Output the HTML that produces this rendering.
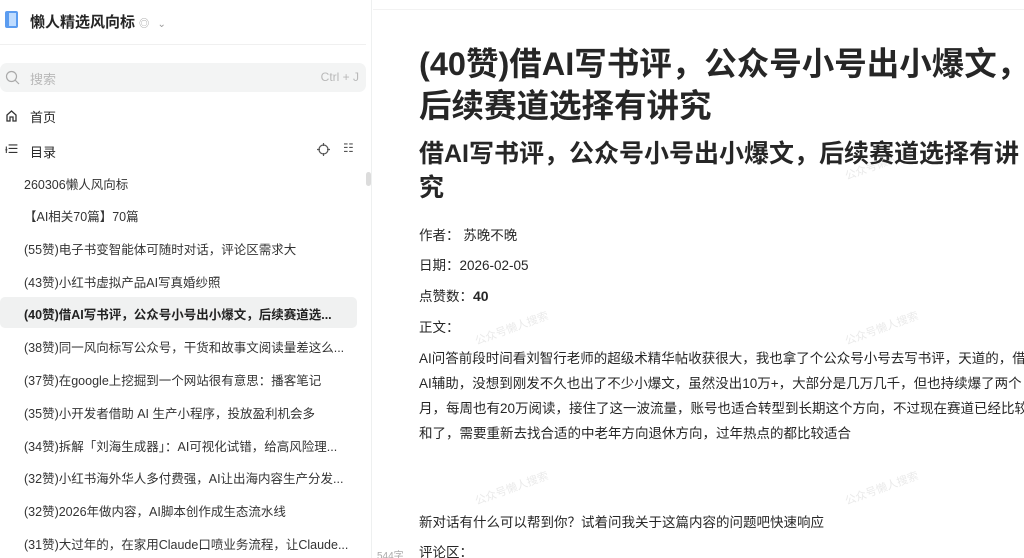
<!DOCTYPE html>
<html><head><meta charset="utf-8"><style>
*{margin:0;padding:0;box-sizing:border-box}
body{width:1024px;height:558px;overflow:hidden;background:#fff;font-family:"Liberation Sans","Noto Sans CJK SC",sans-serif;color:#262626;position:relative}
.side{position:absolute;left:0;top:0;width:372px;height:558px;border-right:1px solid #eef0f0;background:#fff}
.hd{position:absolute;left:0;top:0;height:45px;width:366px;border-bottom:1px solid #f0f0f0}
.logo{position:absolute;left:5px;top:11px;width:13px;height:17px;background:#5b9cf0;border-radius:2px}
.logo:after{content:"";position:absolute;left:4px;top:2px;width:7px;height:13px;background:#bfdcff}
.ttl{position:absolute;left:30px;top:11px;font-size:15px;font-weight:bold;color:#262626}
.search{position:absolute;left:0;top:63px;width:366px;height:29px;background:#f3f4f4;border-radius:7px}
.search .t{position:absolute;left:30px;top:6px;font-size:13px;color:#b8b8b8}
.search .k{position:absolute;right:7px;top:7px;font-size:12px;color:#b8b8b8}
.nav{position:absolute;left:30px;font-size:13px;color:#262626}
.item{position:absolute;left:24px;font-size:12.5px;color:#333;white-space:nowrap}
.sel{position:absolute;left:0;top:297px;width:357px;height:31px;background:#f0f1f1;border-radius:5px}
.main{position:absolute;left:373px;top:0;width:651px;height:558px;overflow:hidden}
.topl{position:absolute;left:0;top:9px;width:651px;border-top:1px solid #f2f2f2}
.main div.x{white-space:nowrap;position:absolute;left:46px}
.h1{font-size:32.5px;font-weight:bold;color:#262626}
.h2{font-size:25px;font-weight:bold;color:#262626}
.p{font-size:13.5px;color:#262626}
.wm{position:absolute;font-size:11px;color:#eaeaea;transform:rotate(-20deg)}
</style></head><body>
<div class="side">
 <div class="hd"><div class="logo"></div><div class="ttl">懒人精选风向标 <span style="font-size:10px;color:#999;font-weight:normal">◎</span>&nbsp;&nbsp;<span style="font-size:10px;color:#999;font-weight:normal">⌄</span></div></div>
 <div class="search"><svg style="position:absolute;left:5px;top:7px" width="15" height="15" viewBox="0 0 15 15"><circle cx="6.5" cy="6.5" r="5" fill="none" stroke="#aaa" stroke-width="1.2"/><path d="M10 10l4 4" stroke="#aaa" stroke-width="1.2"/></svg><span class="t">搜索</span><span class="k">Ctrl + J</span></div>
 <svg style="position:absolute;left:5px;top:109px" width="13" height="13" viewBox="0 0 13 13"><path d="M2 12V6l4.5-4 4.5 4v6H8V8H5v4z" fill="none" stroke="#333" stroke-width="1.3"/></svg>
 <div class="nav" style="top:107px">首页</div>
 <div style="position:absolute;left:5px;top:142px;font-size:12px;color:#333">ᵼ☰</div>
 <div class="nav" style="top:142px">目录</div>
 <svg style="position:absolute;left:317px;top:143px" width="13" height="13" viewBox="0 0 13 13"><circle cx="6.5" cy="6.5" r="4.5" fill="none" stroke="#555" stroke-width="1.2"/><path d="M6.5 0v3M6.5 10v3M0 6.5h3M10 6.5h3" stroke="#555" stroke-width="1.2"/></svg>
 <div style="position:absolute;left:343px;top:141px;font-size:12px;color:#555">☷</div>
 <div style="position:absolute;left:366px;top:172px;width:5px;height:14px;background:#dcdcdc;border-radius:3px"></div>
 <div class="sel"></div>
 <div class="item" style="top:174px">260306懒人风向标</div>
 <div class="item" style="top:206px">【AI相关70篇】70篇</div>
 <div class="item" style="top:239px">(55赞)电子书变智能体可随时对话，评论区需求大</div>
 <div class="item" style="top:272px">(43赞)小红书虚拟产品AI写真婚纱照</div>
 <div class="item" style="top:304px;font-weight:bold;color:#222">(40赞)借AI写书评，公众号小号出小爆文，后续赛道选...</div>
 <div class="item" style="top:337px">(38赞)同一风向标写公众号，干货和故事文阅读量差这么...</div>
 <div class="item" style="top:370px">(37赞)在google上挖掘到一个网站很有意思：播客笔记</div>
 <div class="item" style="top:403px">(35赞)小开发者借助 AI 生产小程序，投放盈利机会多</div>
 <div class="item" style="top:436px">(34赞)拆解「刘海生成器」：AI可视化试错，给高风险理...</div>
 <div class="item" style="top:468px">(32赞)小红书海外华人多付费强，AI让出海内容生产分发...</div>
 <div class="item" style="top:501px">(32赞)2026年做内容，AI脚本创作成生态流水线</div>
 <div class="item" style="top:534px">(31赞)大过年的，在家用Claude口喷业务流程，让Claude...</div>
</div>
<div class="main">
 <div class="topl"></div>
 <span class="wm" style="left:470px;top:155px">公众号懒人搜索</span>
 <span class="wm" style="left:100px;top:320px">公众号懒人搜索</span>
 <span class="wm" style="left:470px;top:320px">公众号懒人搜索</span>
 <span class="wm" style="left:100px;top:480px">公众号懒人搜索</span>
 <span class="wm" style="left:470px;top:480px">公众号懒人搜索</span>
 <div class="x h1" style="top:38px">(40赞)借AI写书评，公众号小号出小爆文，</div>
 <div class="x h1" style="top:80px">后续赛道选择有讲究</div>
 <div class="x h2" style="top:134px">借AI写书评，公众号小号出小爆文，后续赛道选择有讲</div>
 <div class="x h2" style="top:168px">究</div>
 <div class="x p" style="top:224px">作者：&nbsp;苏晚不晚</div>
 <div class="x p" style="top:254px">日期：2026-02-05</div>
 <div class="x p" style="top:285px">点赞数：<b style="font-size:14px">40</b></div>
 <div class="x p" style="top:316px">正文：</div>
 <div class="x p" style="top:347px">AI问答前段时间看刘智行老师的超级术精华帖收获很大，我也拿了个公众号小号去写书评，天道的，借</div>
 <div class="x p" style="top:372px">AI辅助，没想到刚发不久也出了不少小爆文，虽然没出10万+，大部分是几万几千，但也持续爆了两个</div>
 <div class="x p" style="top:397px">月，每周也有20万阅读，接住了这一波流量，账号也适合转型到长期这个方向，不过现在赛道已经比较饱</div>
 <div class="x p" style="top:422px">和了，需要重新去找合适的中老年方向退休方向，过年热点的都比较适合</div>
 <div class="x p" style="top:511px">新对话有什么可以帮到你？试着问我关于这篇内容的问题吧快速响应</div>
 <div class="x p" style="top:541px">评论区：</div>
 <div style="position:absolute;left:4px;top:547px;font-size:10px;color:#aaa">544字</div>
</div>
</body></html>
